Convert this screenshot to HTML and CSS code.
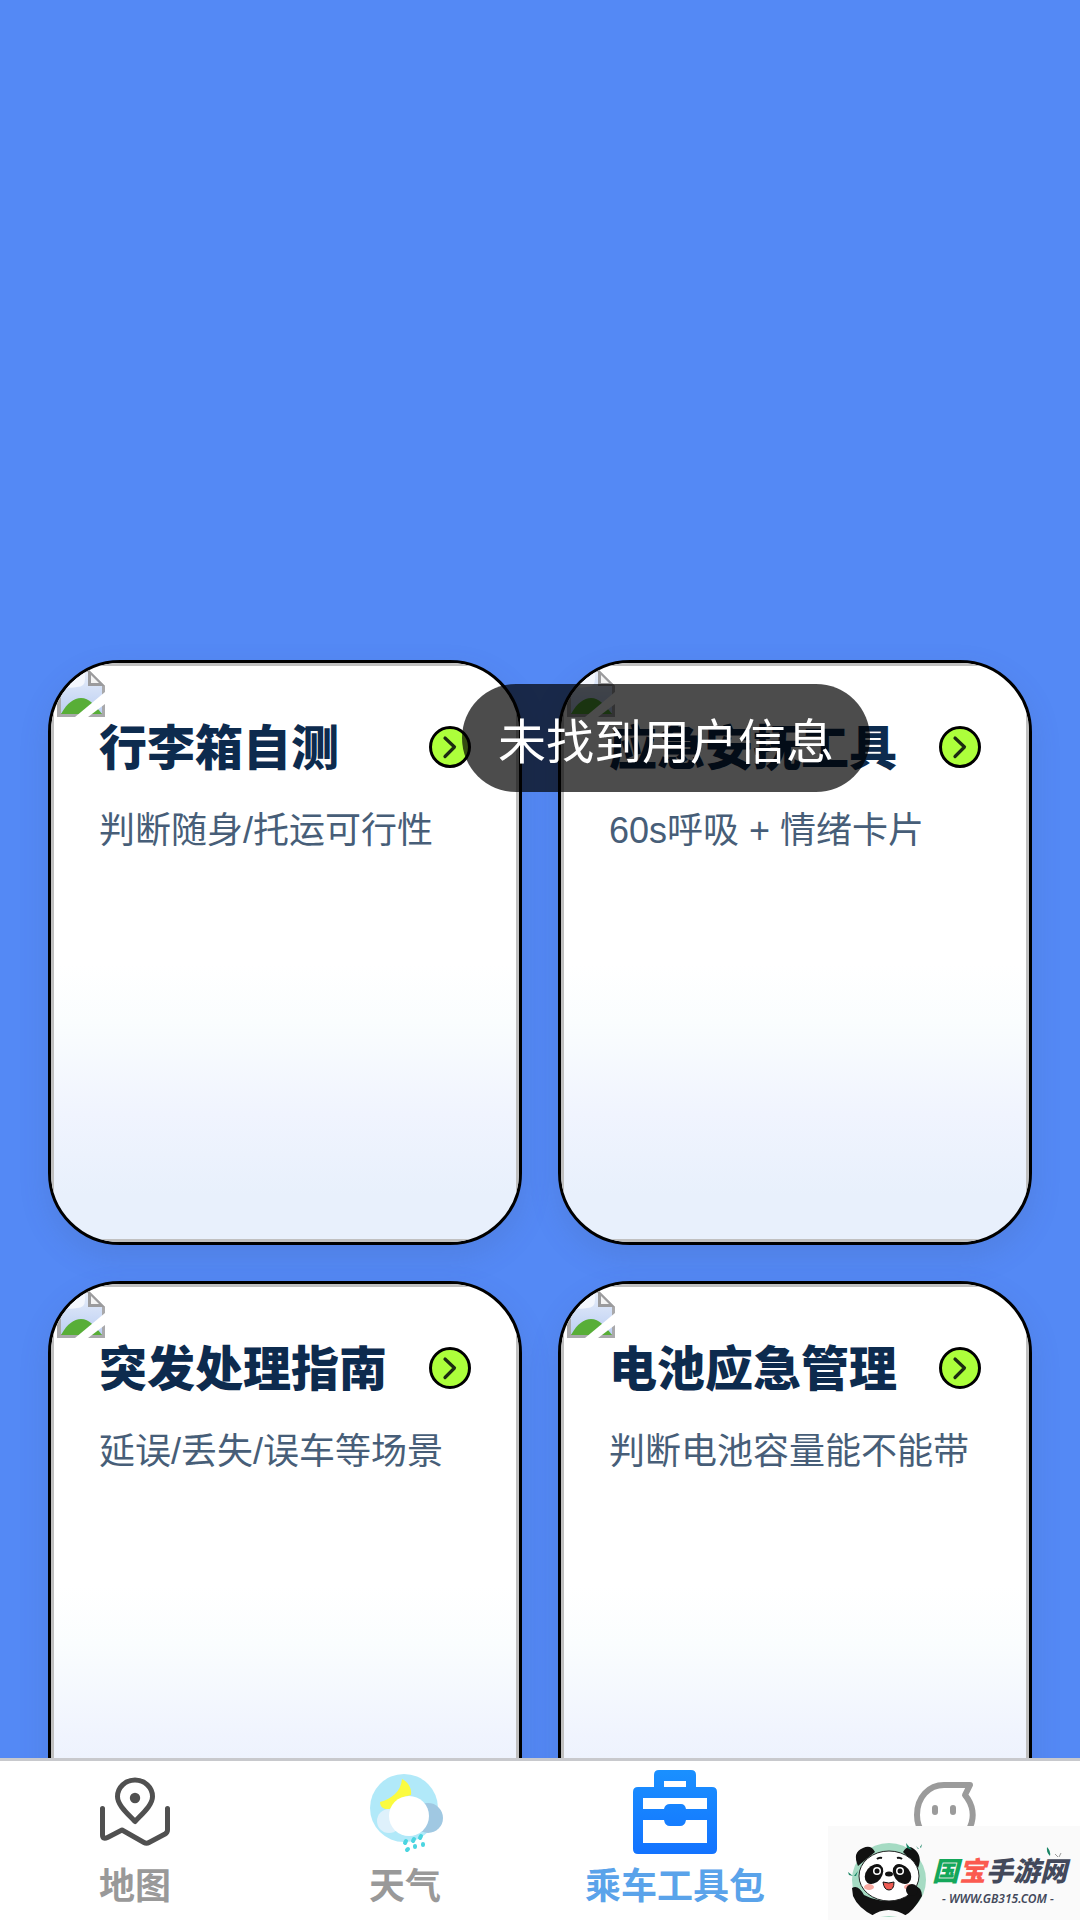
FILE: index.html
```
<!DOCTYPE html>
<html lang="zh-CN">
<head>
<meta charset="utf-8">
<meta name="viewport" content="width=device-width, initial-scale=1">
<title>乘车工具包</title>
<link rel="stylesheet" href="styles.css">
</head>
<body>
<svg class="defs" aria-hidden="true">
  <linearGradient id="sky" x1="0" y1="0" x2="0" y2="1"><stop offset="0" stop-color="#e6edfa"/><stop offset="1" stop-color="#bccff2"/></linearGradient>
  <symbol id="missing" viewBox="0 0 48 48">
    <path d="M0 0H31L48 17V48H0Z" fill="#a9a9ab"/>
    <path d="M4 3H31V17H45V44H4Z" fill="url(#sky)"/>
    <path d="M4 3H28V10Q28 18 20 18Q10 20 4 16Z" fill="#f4f7fd"/>
    <path d="M4 45C10 34 17 29 24 29C32 29 38 36 45 45Z" fill="#58ae37"/>
    <path d="M31 0L48 17H31Z" fill="#9b9b9d"/>
    <path d="M34 6L42 14H34Z" fill="#f4f4f4"/>
    <path d="M18 48L48 23V35L31 48Z" fill="#fff"/>
  </symbol>
  <symbol id="go" viewBox="0 0 42 42">
    <circle cx="21" cy="21" r="19.500" fill="#adff3b" stroke="#000" stroke-width="3"/>
    <path d="M16 12L25.500 21L16 30.500" fill="none" stroke="#1c2b12" stroke-width="3.200" stroke-linecap="round" stroke-linejoin="round"/>
  </symbol>
</svg>

<main class="page">
  <section class="grid">
    <a class="card" href="#luggage">
      <svg class="missing"><use href="#missing"/></svg>
      <span class="head"><span class="title">行李箱自测</span><svg class="go"><use href="#go"/></svg></span>
      <span class="desc">判断随身/托运可行性</span>
    </a>
    <a class="card" href="#calm">
      <svg class="missing"><use href="#missing"/></svg>
      <span class="head"><span class="title">应急安抚工具</span><svg class="go"><use href="#go"/></svg></span>
      <span class="desc">60s呼吸 + 情绪卡片</span>
    </a>
    <a class="card" href="#guide">
      <svg class="missing"><use href="#missing"/></svg>
      <span class="head"><span class="title">突发处理指南</span><svg class="go"><use href="#go"/></svg></span>
      <span class="desc">延误/丢失/误车等场景</span>
    </a>
    <a class="card" href="#battery">
      <svg class="missing"><use href="#missing"/></svg>
      <span class="head"><span class="title">电池应急管理</span><svg class="go"><use href="#go"/></svg></span>
      <span class="desc">判断电池容量能不能带</span>
    </a>
  </section>
</main>

<div class="toast" role="status">未找到用户信息</div>

<nav class="tabs">
  <a class="tab" href="#map">
    <svg class="icon" viewBox="0 0 84 84" fill="none" stroke="#505050" stroke-width="5" stroke-linecap="round" stroke-linejoin="round">
      <path d="M42 51.500C34 43 24.500 35 24.500 26.500a17.500 16.500 0 0 1 35 0C59.500 35 50 43 42 51.500Z"/>
      <circle cx="42" cy="28" r="5.200" fill="#505050" stroke="none"/>
      <path d="M9.500 38.500V65Q9.500 70 14.500 67.500L29 60L51 72.500Q53.500 74 56 72.500L72 64Q74.500 62.500 74.500 60V38.500"/>
    </svg>
    <span>地图</span>
  </a>
  <a class="tab" href="#weather">
    <svg class="icon" viewBox="0 0 84 84">
      <circle cx="41" cy="38" r="34" fill="#b1e9f9"/>
      <path d="M39 9C45 12 49 18 48 25Q38 26 30 37Q25 41 20 38Q17 36 17 32C28 29 38 22 39 9Z" fill="#fbfb3f"/>
      <circle cx="65" cy="48" r="15" fill="#a0c8e2"/>
      <circle cx="26" cy="51" r="12" fill="#def1fb"/>
      <circle cx="46" cy="46" r="20" fill="#fff"/>
      <path d="M43 71l-1 2M51 69l-1 2M58 66l-1 2M45 79l-1 1M52 76l0 1M60 74l0 1" stroke="#4cd5e0" stroke-width="4" stroke-linecap="round"/>
    </svg>
    <span>天气</span>
  </a>
  <a class="tab active" href="#toolkit" aria-current="page">
    <svg class="icon" viewBox="0 0 84 84">
      <defs><linearGradient id="bag" x1="0" y1="0" x2="0" y2="1"><stop offset="0" stop-color="#1a90ff"/><stop offset="1" stop-color="#1373ff"/></linearGradient></defs>
      <path fill="url(#bag)" fill-rule="evenodd" d="M26 0H58Q63 0 63 5V17H79Q84 17 84 22V79Q84 84 79 84H5Q0 84 0 79V22Q0 17 5 17H21V5Q21 0 26 0ZM31 11V17H53V11ZM10 28V39H31Q32 34 37 34H48Q52 34 53 39H74V28ZM10 50V73H74V50H53Q52 56 47 56H37Q32 56 31 50Z"/>
    </svg>
    <span>乘车工具包</span>
  </a>
  <a class="tab" href="#me" aria-label="我的">
    <svg class="icon" viewBox="0 0 84 84" fill="none" stroke="#9b9b9b" stroke-width="6" stroke-linejoin="round">
      <path d="M41 15H67L62 25C79 45 66 73 41 73C23 73 14 59 14 45C14 27 26 15 41 15Z"/>
      <path d="M32 38v4M50 38v4" stroke-linecap="round"/>
    </svg>
  </a>
</nav>

<aside class="mark">
  <svg class="panda" viewBox="0 0 84 80">
    <circle cx="43" cy="40" r="37" fill="#a5dbc3"/>
    <path d="M12 26Q6 12 17 8Q25 4 29 12ZM57 12Q62 4 68 9Q77 16 72 28Z" fill="#111"/>
    <path d="M6 48Q12 44 18 55Q40 66 60 56Q58 45 66 44Q76 47 76 56Q67 72 58 76H28Q12 68 7 56Z" fill="#111"/>
    <path d="M25 76Q42 64 61 76Z" fill="#fafafa"/>
    <ellipse cx="43" cy="36" rx="30" ry="25" fill="#fff" stroke="#222"/>
    <ellipse cx="28" cy="34" rx="8" ry="11" transform="rotate(38 28 34)" fill="#111"/>
    <ellipse cx="56" cy="34" rx="8" ry="11" transform="rotate(-38 56 34)" fill="#111"/>
    <g fill="#fff"><circle cx="31" cy="31" r="4"/><circle cx="54" cy="31" r="4"/></g>
    <g fill="#111"><circle cx="31" cy="31" r="2.500"/><circle cx="54" cy="31" r="2.500"/><ellipse cx="43" cy="34" rx="4" ry="2.500"/></g>
    <path d="M31 19q2-2 5-1M51 18q3-1 5 1" stroke="#111" stroke-width="2" fill="none"/>
    <path d="M37 42Q43 44 48 42Q48 50 43 50Q38 50 37 42Z" fill="#ee5b53" stroke="#111"/>
    <g fill="#f9aaa2"><ellipse cx="23" cy="47" rx="5" ry="3"/><ellipse cx="63" cy="47" rx="5" ry="3"/></g>
    <circle cx="66" cy="50" r="6" fill="#111"/>
    <path d="M60 3l6 7-5-2zM2 32l5 4-4-1zM8 36l4-5-2 5zM70 6l3 3-1 0zM76 4l-1 4-1-1z" fill="#188565"/>
  </svg>
  <div class="words">
    <div class="brand"><b class="guo">国</b><b class="bao">宝</b><b>手游网</b></div>
    <div class="url">- WWW.GB315.COM -</div>
  </div>
  <svg class="leaf" viewBox="0 0 16 12"><path d="M1 0q4 4 3 9q-4-4-3-9z" fill="#188565"/><path d="M9 7l3 3M15 6l-2 4" stroke="#999" fill="none"/></svg>
</aside>
</body>
</html>
```
FILE: styles.css
```
* { box-sizing: border-box; }
body {
  margin: 0;
  height: 100vh;
  display: flex;
  flex-direction: column;
  overflow: hidden;
  background: #5489f5;
  font-family: "Liberation Sans", "Noto Sans CJK SC", sans-serif;
}
a { color: inherit; text-decoration: none; }
.defs { position: absolute; width: 0; height: 0; }

.page { flex: 1; min-height: 0; overflow: hidden; padding: 660px 48px 0; }
.grid { display: grid; grid-template-columns: 1fr 1fr; gap: 36px; }
.card {
  position: relative;
  display: flex;
  flex-direction: column;
  height: 585px;
  padding: 60px 48px 48px;
  overflow: hidden;
  border: 3px solid #000;
  border-radius: 72px;
  background: linear-gradient(#fff 52%, #fafdfe 62%, #f0f4fe 78%, #e8f0fc 92%);
  box-shadow: 0 12px 30px rgba(60, 80, 130, 0.16);
}
.card::before {
  content: "";
  position: absolute;
  inset: 0;
  border: 3px solid #c0c0c0;
}
.missing { position: absolute; left: 6px; top: 6px; width: 48px; height: 48px; }
.head { display: flex; align-items: center; justify-content: space-between; height: 48px; }
.title { padding-top: 4px; font-size: 48px; line-height: 48px; font-weight: 900; color: #0d2b4e; white-space: nowrap; }
.go { width: 42px; height: 42px; flex: none; }
.desc { margin-top: 36px; font-size: 36px; line-height: 48px; color: #475e78; white-space: nowrap; }

.toast {
  position: fixed;
  left: 462px;
  top: 684px;
  padding: 23px 36px 13px;
  border-radius: 54px;
  background: rgba(0, 0, 0, 0.7);
  color: #fff;
  font-size: 48px;
  line-height: 72px;
  white-space: nowrap;
}

.tabs {
  display: grid;
  grid-template-columns: repeat(4, 1fr);
  height: 162px;
  border-top: 3px solid #c8c9cd;
  background: #fff;
}
.tab {
  display: flex;
  flex-direction: column;
  align-items: center;
  gap: 9px;
  padding-top: 9px;
  color: #999;
  font-size: 36px;
  line-height: 48px;
  font-weight: 700;
}
.tab.active { color: #5aa3ea; }
.icon { width: 84px; height: 84px; }

.mark {
  position: fixed;
  right: 0;
  bottom: 0;
  display: flex;
  align-items: flex-start;
  width: 252px;
  height: 94px;
  padding: 14px 0 0 18px;
  background: #fafafa;
}
.panda { width: 84px; height: 80px; flex: none; }
.words { display: flex; flex-direction: column; padding: 14px 0 0 2px; white-space: nowrap; }
.brand { font-size: 27px; line-height: 36px; font-style: italic; color: #43495b; }
.brand b { font-weight: 900; }
.brand .guo { color: #14a75a; }
.brand .bao { color: #fb5a50; }
.url { padding-left: 10px; font: italic 600 12px/18px "Noto Sans", sans-serif; color: #43495b; }
.leaf { position: absolute; right: 18px; top: 21px; width: 16px; height: 12px; }
```
